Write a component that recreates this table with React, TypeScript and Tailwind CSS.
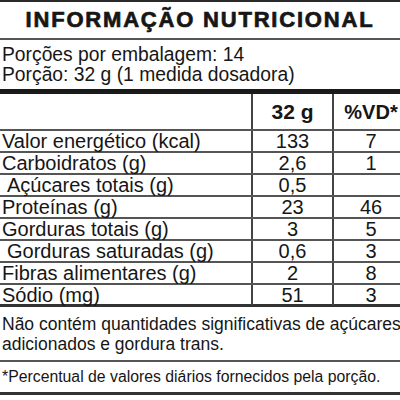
const rows = [
  { label: "Valor energético (kcal)", qty: "133", vd: "7", indent: false },
  { label: "Carboidratos (g)", qty: "2,6", vd: "1", indent: false },
  { label: "Açúcares totais (g)", qty: "0,5", vd: "", indent: true },
  { label: "Proteínas (g)", qty: "23", vd: "46", indent: false },
  { label: "Gorduras totais (g)", qty: "3", vd: "5", indent: false },
  { label: "Gorduras saturadas (g)", qty: "0,6", vd: "3", indent: true },
  { label: "Fibras alimentares (g)", qty: "2", vd: "8", indent: false },
  { label: "Sódio (mg)", qty: "51", vd: "3", indent: false },
];

const App = () => {
  return (
    <div
      className="w-[400px] h-[400px] overflow-hidden bg-white text-[#161616] flex flex-col"
      style={{ fontFamily: '"Liberation Sans", Arial, sans-serif' }}
    >
      <div className="h-[2px] bg-[#2a2a2a]" />
      <div className="h-[36px] flex items-center justify-center">
        <h1 className="text-[22px] font-bold tracking-[1.8px] leading-none whitespace-nowrap [-webkit-text-stroke:0.7px_#161616]">
          INFORMAÇÃO NUTRICIONAL
        </h1>
      </div>
      <div className="h-[2px] bg-[#555]" />
      <div className="h-[49px] flex flex-col justify-center pl-[2px] text-[19.3px] leading-[20px] whitespace-nowrap">
        <p>Porções por embalagem: 14</p>
        <p>Porção: 32 g (1 medida dosadora)</p>
      </div>
      <div className="h-[5px] bg-[#1a1a1a]" />

      <div className="grid grid-cols-[251px_81px_1fr] h-[37px] border-b-2 border-[#555]">
        <div />
        <div className="border-l-2 border-[#444] flex items-center justify-center text-[21px] font-bold">
          32 g
        </div>
        <div className="border-l-2 border-[#444] flex items-center justify-center pl-2 text-[20px] font-bold whitespace-nowrap">
          %VD*
        </div>
      </div>

      {rows.map((row, index) => (
        <div
          key={index}
          className={`grid grid-cols-[251px_81px_1fr] h-[22px] text-[20px] leading-[20px] ${
            index === rows.length - 1 ? "border-b-[3px] border-[#333]" : "border-b-2 border-[#555]"
          }`}
        >
          <div className={`flex items-center whitespace-nowrap ${row.indent ? "pl-[7px]" : "pl-[2px]"}`}>
            {row.label}
          </div>
          <div className="border-l-2 border-[#444] flex items-center justify-center">{row.qty}</div>
          <div className="border-l-2 border-[#444] flex items-center justify-center pl-2">{row.vd}</div>
        </div>
      ))}

      <div className="h-[53px] flex flex-col justify-center pl-[2px] text-[17.5px] leading-[20px] whitespace-nowrap">
        <p>Não contém quantidades significativas de açúcares</p>
        <p>adicionados e gordura trans.</p>
      </div>
      <div className="h-[2px] bg-[#555]" />
      <div className="h-[30px] flex items-center pl-[2px] text-[15.8px] whitespace-nowrap">
        *Percentual de valores diários fornecidos pela porção.
      </div>
      <div className="h-[3px] bg-[#333]" />
    </div>
  );
};

export default App;
